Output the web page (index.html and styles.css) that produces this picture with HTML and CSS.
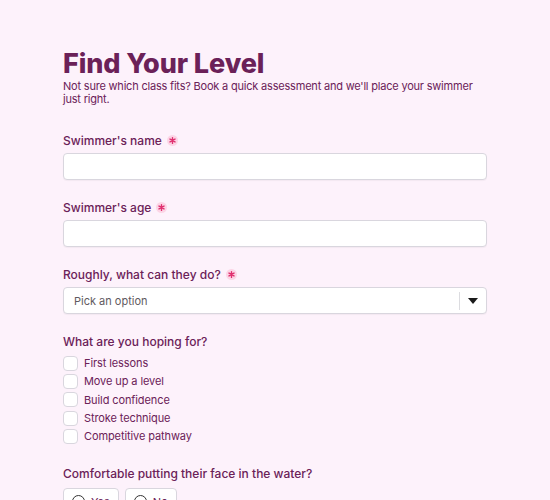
FILE: index.html
```html
<!DOCTYPE html>
<html>
    <head>
        <title>Find Your Level</title>
        <meta charset="UTF-8">
        <meta name="viewport" content="width=device-width, initial-scale=1.0">
        <link rel="stylesheet" href="styles.css">
    </head>
    <body>
        <form class="level-form">
            <h1 class="title">Find Your Level</h1>
            <p class="intro">Not sure which class fits? Book a quick assessment and we'll place your swimmer just right.</p>

            <div class="field first">
                <label class="label">Swimmer's name
                    <svg class="req" width="11" height="11" viewBox="0 0 11 11"><circle cx="5.5" cy="5.5" r="5.5" fill="#fcd5e6"/><path d="M5.5 2.6v5.8M3 4.05l5 2.9M3 6.95l5-2.9" stroke="#e0306f" stroke-width="1.4" stroke-linecap="round"/></svg>
                </label>
                <input type="text" class="input" name="name">
            </div>

            <div class="field">
                <label class="label">Swimmer's age
                    <svg class="req" width="11" height="11" viewBox="0 0 11 11"><circle cx="5.5" cy="5.5" r="5.5" fill="#fcd5e6"/><path d="M5.5 2.6v5.8M3 4.05l5 2.9M3 6.95l5-2.9" stroke="#e0306f" stroke-width="1.4" stroke-linecap="round"/></svg>
                </label>
                <input type="text" class="input" name="age">
            </div>

            <div class="field">
                <label class="label">Roughly, what can they do?
                    <svg class="req" width="11" height="11" viewBox="0 0 11 11"><circle cx="5.5" cy="5.5" r="5.5" fill="#fcd5e6"/><path d="M5.5 2.6v5.8M3 4.05l5 2.9M3 6.95l5-2.9" stroke="#e0306f" stroke-width="1.4" stroke-linecap="round"/></svg>
                </label>
                <div class="select">
                    <span class="select-value">Pick an option</span>
                    <span class="select-divider"></span>
                    <span class="select-arrow">
                        <svg width="10" height="6" viewBox="0 0 10 6"><path d="M0 0h10L5 6z" fill="#1a1a1a"/></svg>
                    </span>
                </div>
            </div>

            <div class="field">
                <span class="label">What are you hoping for?</span>
                <div class="checks">
                    <label class="check"><span class="box"></span>First lessons</label>
                    <label class="check"><span class="box"></span>Move up a level</label>
                    <label class="check"><span class="box"></span>Build confidence</label>
                    <label class="check"><span class="box"></span>Stroke technique</label>
                    <label class="check"><span class="box"></span>Competitive pathway</label>
                </div>
            </div>

            <div class="field">
                <span class="label">Comfortable putting their face in the water?</span>
                <div class="radios">
                    <label class="radio"><span class="dot"></span>Yes</label>
                    <label class="radio"><span class="dot"></span>No</label>
                </div>
            </div>
        </form>
    </body>
</html>
```

FILE: styles.css
```css
* {box-sizing: border-box;}

body {
    margin: 0;
    background-color: #fdf2fb;
    font-family: Inter, "Noto Sans", sans-serif;
    color: #6b2158;
}

/* Centered form column */
.level-form {
    width: 424px;
    margin: 0 auto;
    padding-top: 48px;
}

.title {
    margin: 0;
    font-size: 27px;
    font-weight: 800;
    line-height: 32px;
    letter-spacing: -0.1px;
}

.intro {
    margin: 0;
    font-size: 11px;
    line-height: 13px;
    letter-spacing: -0.2px;
}

.field {
    margin-top: 20px;
}

.field.first {
    margin-top: 27px;
}

.label {
    display: flex;
    align-items: center;
    gap: 5px;
    font-size: 12px;
    font-weight: 500;
    line-height: 16px;
    margin-bottom: 4px;
}

/* Required marker - pink star on a soft dot */
.req {
    display: block;
    margin-top: -2px;
}

.input, .select {
    display: block;
    width: 100%;
    height: 27px;
    border: 1px solid #d9d6de;
    border-radius: 4px;
    background: #fff;
    box-shadow: 0 1px 1px rgba(0, 0, 0, 0.04);
}

.select {
    display: flex;
    align-items: center;
    font-size: 11px;
    color: #5f5a60;
}

.select-value {
    flex: 1;
    padding-left: 10px;
}

.select-divider {
    width: 1px;
    height: 18px;
    background: #dcdce0;
}

.select-arrow {
    width: 26px;
    display: flex;
    justify-content: center;
}

.checks {
    display: flex;
    flex-direction: column;
}

.check {
    display: flex;
    align-items: center;
    gap: 6px;
    height: 18.33px;
    font-size: 11px;
    letter-spacing: -0.1px;
}

.box {
    width: 15px;
    height: 15px;
    border: 1px solid #d9d6de;
    border-radius: 4px;
    background: #fff;
}

.radios {
    display: flex;
    gap: 6px;
    margin-top: 6px;
}

.radio {
    display: flex;
    align-items: center;
    gap: 6px;
    height: 28px;
    padding: 0 8px;
    border: 1px solid #d9d6de;
    border-radius: 4px;
    background: #fff;
    font-size: 11px;
}

.dot {
    width: 13px;
    height: 13px;
    border: 1.5px solid #333;
    border-radius: 50%;
}
```
